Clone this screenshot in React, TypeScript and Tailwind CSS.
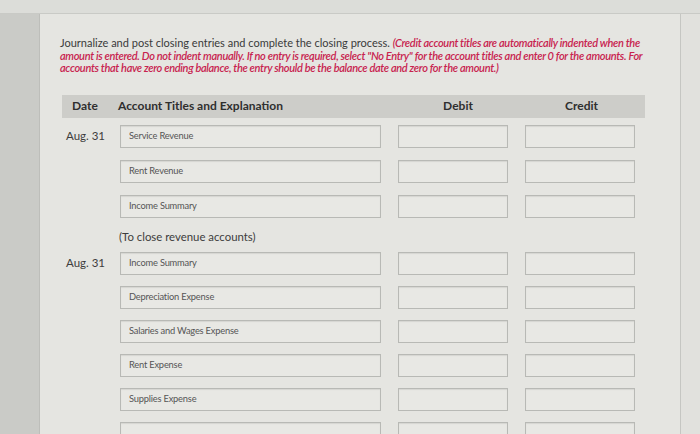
import React from 'react';

type Row = { date?: string; account: string };

const revenueRows: Row[] = [
  { date: 'Aug. 31', account: 'Service Revenue' },
  { account: 'Rent Revenue' },
  { account: 'Income Summary' },
];

const expenseRows: Row[] = [
  { date: 'Aug. 31', account: 'Income Summary' },
  { account: 'Depreciation Expense' },
  { account: 'Salaries and Wages Expense' },
  { account: 'Rent Expense' },
  { account: 'Supplies Expense' },
  { account: '' },
];

function EntryRow({ row }: { row: Row }) {
  return (
    <div className="flex items-center h-[23px]">
      <div className="w-[60px] pl-[6px] text-[11.5px] text-[#3d3d3d]">{row.date}</div>
      <div className="w-[261px] h-full border border-[#b8b9b5] bg-[#e8e8e4] shadow-[inset_0_1px_1px_rgba(0,0,0,0.08)] flex items-center pl-[8px] text-[9.3px] tracking-[-0.2px] text-[#555]">
        {row.account}
      </div>
      <div className="w-[17px]" />
      <div className="w-[110px] h-full border border-[#b8b9b5] bg-[#e8e8e4] shadow-[inset_0_1px_1px_rgba(0,0,0,0.08)]" />
      <div className="w-[17px]" />
      <div className="w-[110px] h-full border border-[#b8b9b5] bg-[#e8e8e4] shadow-[inset_0_1px_1px_rgba(0,0,0,0.08)]" />
    </div>
  );
}

export default function App() {
  return (
    <div
      className="w-[700px] h-[434px] overflow-hidden flex flex-col bg-[#d6d7d3]"
      style={{ fontFamily: 'Lato, "Open Sans", sans-serif' }}
    >
      {/* top band */}
      <div className="h-[14px] bg-[#dcddd9] border-b border-[#c9cac6] shrink-0" />

      <div className="flex flex-1 min-h-0">
        {/* left strip */}
        <div className="w-[40px] bg-[#cacbc7] border-r border-[#bdbeba] shrink-0" />

        {/* main panel */}
        <div className="flex-1 bg-[#e5e5e1] pl-[20px] pt-[23px] flex flex-col">
          <p className="text-[11px] leading-[12.5px] text-[#3a3a3a] whitespace-nowrap">
            Journalize and post closing entries and complete the closing process.{' '}
            <span className="italic font-semibold tracking-[-0.33px] text-[#c8234f]">
              (Credit account titles are automatically indented when the
              <br />
              amount is entered. Do not indent manually. If no entry is required, select "No Entry" for the account
              titles and enter 0 for the amounts. For
              <br />
              accounts that have zero ending balance, the entry should be the balance date and zero for the amount.)
            </span>
          </p>

          {/* header */}
          <div className="mt-[20px] ml-[2px] w-[583px] h-[23px] shrink-0 bg-[#cdcdc9] flex items-center text-[12px] font-bold text-[#2f2f2f]">
            <div className="w-[56px] pl-[10px]">Date</div>
            <div className="w-[280px]">Account Titles and Explanation</div>
            <div className="w-[120px] text-center">Debit</div>
            <div className="w-[127px] text-center">Credit</div>
          </div>

          <div className="mt-[7px] flex flex-col gap-[12px]">
            {revenueRows.map((r, i) => (
              <EntryRow key={i} row={r} />
            ))}
          </div>

          <div className="mt-[11px] ml-[59px] text-[11.4px] leading-[16px] text-[#3d3d3d]">
            (To close revenue accounts)
          </div>

          <div className="mt-[7px] flex flex-col gap-[11px]">
            {expenseRows.map((r, i) => (
              <EntryRow key={i} row={r} />
            ))}
          </div>
        </div>

        {/* right strip */}
        <div className="w-[20px] bg-[#e1e1dd] border-l border-[#c5c6c2] shrink-0" />
      </div>
    </div>
  );
}
